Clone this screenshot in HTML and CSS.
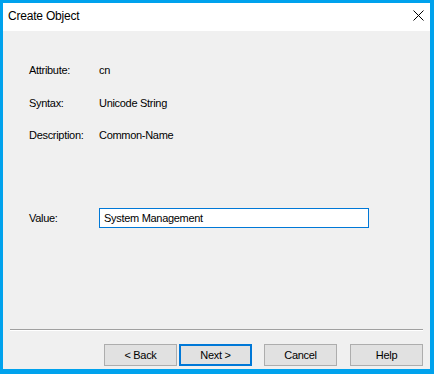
FILE: index.html
```html
<!DOCTYPE html>
<html lang="en">
<head>
    <meta charset="UTF-8">
    <title>Create Object</title>
    <link rel="stylesheet" href="styles.css">
</head>
<body>
    <div class="window">
        <div class="titlebar">
            <span class="title">Create Object</span>
            <svg class="close" width="11" height="11" viewBox="0 0 11 11">
                <path d="M0.5 0.5 L10.5 10.5 M10.5 0.5 L0.5 10.5" stroke="#000" stroke-width="1" fill="none"/>
            </svg>
        </div>
        <div class="content">
            <div class="info">
                <span class="label">Attribute:</span><span>cn</span>
                <span class="label">Syntax:</span><span>Unicode String</span>
                <span class="label">Description:</span><span>Common-Name</span>
            </div>
            <div class="value-row">
                <label class="label" for="value">Value:</label>
                <input type="text" id="value" value="System Management">
            </div>
        </div>
        <div class="separator"></div>
        <div class="buttons">
            <button class="button back">&lt; Back</button>
            <button class="button next">Next &gt;</button>
            <button class="button cancel">Cancel</button>
            <button class="button help">Help</button>
        </div>
    </div>
</body>
</html>
```

FILE: styles.css
```css
body {
    margin: 0;
    padding: 0;
    width: 434px;
    height: 374px;
    background: #00a2ed;
    font-family: 'Liberation Sans', Arial, sans-serif;
    font-size: 11px;
    letter-spacing: -0.3px;
    color: #000;
    overflow: hidden;
}
.window {
    margin: 3px 4px 5px 3px;
    height: 366px;
    background: #f0f0f0;
    display: flex;
    flex-direction: column;
}
.titlebar {
    height: 28px;
    background: #fff;
    display: flex;
    align-items: center;
    justify-content: space-between;
    padding: 0 6px 0 5px;
}
.title {
    font-size: 12px;
    letter-spacing: -0.2px;
    margin-top: -2px;
}
.close {
    display: block;
    margin-top: -3px;
}
.content {
    flex: 1;
    padding: 32px 0 0 26px;
}
.info {
    display: grid;
    grid-template-columns: 70px auto;
    grid-auto-rows: 14px;
    row-gap: 18.5px;
    line-height: 14px;
}
.value-row {
    display: flex;
    align-items: center;
    margin-top: 66px;
}
.value-row .label {
    width: 70px;
}
.value-row input {
    width: 270px;
    height: 20px;
    box-sizing: border-box;
    border: 1px solid #0078d7;
    padding: 0 4px;
    margin: 0;
    font-family: inherit;
    font-size: 11px;
    letter-spacing: -0.3px;
    color: #000;
    background: #fff;
    outline: none;
}
.separator {
    margin: 0 7px;
    border-top: 1px solid #a0a0a0;
    border-bottom: 1px solid #fff;
}
.buttons {
    display: flex;
    justify-content: flex-end;
    padding: 13px 7px 3px 0;
}
.button {
    width: 73px;
    height: 22px;
    box-sizing: border-box;
    margin: 0;
    padding: 0;
    border: 1px solid #adadad;
    background: #e1e1e1;
    font-family: inherit;
    font-size: 11px;
    letter-spacing: -0.3px;
    color: #000;
}
.next {
    margin-left: 2px;
    border: 2px solid #0078d7;
}
.cancel {
    margin-left: 12px;
}
.help {
    margin-left: 13px;
}
```
